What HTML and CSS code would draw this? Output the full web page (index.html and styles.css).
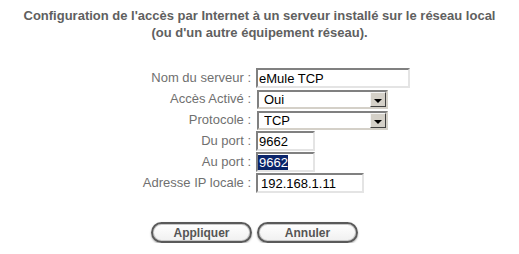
FILE: index.html
```html
<!DOCTYPE html>
<html lang="fr">
<head>
    <meta charset="utf-8" />
    <title>Serveur virtuel</title>
    <link rel="stylesheet" href="styles.css">
</head>
<body>
    <h2 class="title">Configuration de l'accès par Internet à un serveur installé sur le réseau local<br />(ou d'un autre équipement réseau).</h2>
    <form class="server-form">
        <label for="nom">Nom du serveur :</label>
        <div><input class="field w-name" id="nom" value="eMule TCP" /></div>

        <label for="acces">Accès Activé :</label>
        <div class="select-wrap"><select class="field sel" id="acces"><option>Oui</option><option>Non</option></select></div>

        <label for="proto">Protocole :</label>
        <div class="select-wrap"><select class="field sel" id="proto"><option>TCP</option><option>UDP</option></select></div>

        <label for="du">Du port :</label>
        <div><input class="field w-port" id="du" value="9662" /></div>

        <label for="au">Au port :</label>
        <div><input class="field w-port selected" id="au" value="9662" /></div>

        <label for="ip">Adresse IP locale :</label>
        <div><input class="field w-ip" id="ip" value="192.168.1.11" /></div>
    </form>
    <div class="buttons">
        <button class="btn">Appliquer</button>
        <button class="btn">Annuler</button>
    </div>
</body>
</html>
```

FILE: styles.css
```css
html {
    font-size: 13px;
}
body {
    margin: 0;
    font-family: "Liberation Sans", Arial, sans-serif;
    background: #fff;
    color: #666;
}
.title {
    margin: 7px 0 0;
    font-size: 13px;
    line-height: 17px;
    font-weight: bold;
    text-align: center;
    color: #606060;
}
.server-form {
    display: grid;
    grid-template-columns: 251px auto;
    column-gap: 5px;
    row-gap: 1px;
    margin-top: 27px;
    align-items: center;
}
.server-form label {
    text-align: right;
    line-height: 20px;
    color: #707070;
}
.field {
    display: block;
    box-sizing: border-box;
    height: 20px;
    margin: 0;
    padding: 0 1px;
    font-family: "Liberation Sans", Arial, sans-serif;
    font-size: 13px;
    color: #000;
    background: #fff;
    border: 2px solid;
    border-color: #808080 #e4e4e4 #e4e4e4 #808080;
    outline: none;
}
.w-name {
    width: 154px;
}
.w-port {
    width: 59px;
}
.w-ip {
    width: 108px;
    padding-left: 3px;
}
.selected {
    color: #fff;
    background: #fff linear-gradient(#0a246a, #0a246a) no-repeat 0 1px / 30px 15px;
}
.select-wrap {
    position: relative;
    width: 131px;
    height: 19px;
    margin-left: 1px;
}
.sel {
    -webkit-appearance: none;
    appearance: none;
    width: 131px;
    height: 19px;
    padding-left: 5px;
    border-color: #808080 #d4d0c8 #d4d0c8 #808080;
}
.select-wrap::after {
    content: "";
    position: absolute;
    top: 2px;
    right: 2px;
    width: 16px;
    height: 15px;
    box-sizing: border-box;
    border: 1px solid;
    border-color: #f4f4f4 #404040 #404040 #f4f4f4;
    background: #d4d0c8;
    pointer-events: none;
}
.select-wrap::before {
    content: "";
    position: absolute;
    z-index: 1;
    top: 9px;
    right: 6px;
    width: 0;
    height: 0;
    border-left: 4px solid transparent;
    border-right: 4px solid transparent;
    border-top: 4px solid #000;
    pointer-events: none;
}
.buttons {
    display: flex;
    justify-content: center;
    gap: 5px;
    margin-top: 29px;
    padding-right: 10px;
}
.btn {
    width: 101px;
    height: 21px;
    padding: 0;
    font-family: "Liberation Sans", Arial, sans-serif;
    font-size: 12px;
    font-weight: bold;
    color: #555;
    background: linear-gradient(#ffffff, #f0f0f0);
    border: 2px solid #5a5a5a;
    border-radius: 11px;
    box-shadow: inset 0 0 0 1px #c8c8c8, 0 1px 2px rgba(0, 0, 0, 0.35);
}
```
